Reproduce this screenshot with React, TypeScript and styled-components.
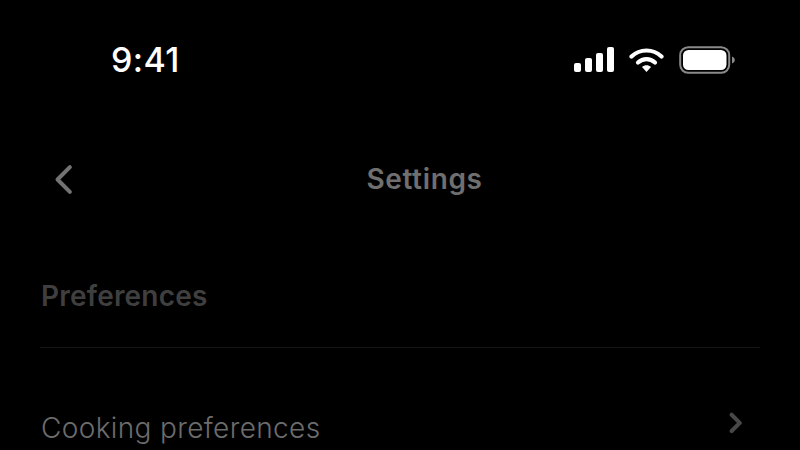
import React from 'react'
import styled, { createGlobalStyle } from 'styled-components'

const GlobalStyle = createGlobalStyle`
    html, body {
        margin: 0;
        height: 100%;
        background: #000;
    }
    body {
        font-family: "Inter", "Liberation Sans", sans-serif;
        overflow: hidden;
    }
`

const Screen = styled.main`
    width: 800px;
    height: 450px;
    overflow: hidden;
    background: #000;
`

const StatusBar = styled.header`
    height: 120px;
    box-sizing: border-box;
    padding: 40px 65px 0 111px;
    display: flex;
    justify-content: space-between;
    align-items: flex-start;
`

const Time = styled.span`
    font-size: 34px;
    line-height: 40px;
    font-weight: 500;
    letter-spacing: 0.4px;
    color: #fff;
`

const StatusIcons = styled.div`
    display: flex;
    align-items: center;
    gap: 15px;
    height: 40px;
`

const NavBar = styled.nav`
    height: 118px;
    padding: 0 3px 0 52px;
    display: grid;
    grid-template-columns: 1fr auto 1fr;
    align-items: center;
`

const BackButton = styled.button`
    padding: 0;
    border: 0;
    background: none;
    width: 60px;
    height: 40px;
    display: flex;
    align-items: center;
`

const NavTitle = styled.h1`
    margin: 0;
    font-size: 28px;
    line-height: 34px;
    font-weight: 600;
    letter-spacing: 0.65px;
    color: #6f6f6f;
`

const Section = styled.section`
    padding: 0 40px;
`

const SectionHeading = styled.h2`
    margin: 0;
    padding: 41px 0 0 1px;
    height: 68px;
    font-size: 28px;
    line-height: 34px;
    font-weight: 600;
    letter-spacing: 0.2px;
    color: #3f3f3f;
    border-bottom: 1px solid #161616;
`

const Row = styled.div`
    display: flex;
    align-items: center;
    justify-content: space-between;
    padding: 63px 18px 0 1px;
`

const RowLabel = styled.span`
    font-size: 28px;
    line-height: 34px;
    font-weight: 350;
    letter-spacing: 0.36px;
    color: #6c6c6c;
`

const RowArrow = styled.span`
    display: flex;
    margin-bottom: 10px;
`

const Chevron: React.FC<{ direction: 'left' | 'right'; color: string; size: number; weight: number }> = ({ direction, color, size, weight }) => (
    <svg width={size} height={size * 1.5} viewBox="0 0 16 24" fill="none">
        <path
            d={direction === 'left' ? 'M13 3 L4 12 L13 21' : 'M4 3 L13 12 L4 21'}
            stroke={color}
            strokeWidth={weight}
            strokeLinecap="round"
            strokeLinejoin="round"
        />
    </svg>
)

const SignalIcon = () => (
    <svg width="40" height="26" viewBox="0 0 40 26" fill="#fff">
        <rect x="0" y="16" width="7" height="9" rx="2" />
        <rect x="11" y="11" width="7" height="14" rx="2" />
        <rect x="22" y="6" width="7" height="19" rx="2" />
        <rect x="33" y="0" width="7" height="25" rx="2" />
    </svg>
)

const WifiIcon = () => (
    <svg width="35" height="26" viewBox="0 0 34 26" fill="none">
        <path d="M2 9.5 C10.5 1.5 23.5 1.5 32 9.5" stroke="#fff" strokeWidth="4.2" strokeLinecap="round" />
        <path d="M8.5 15.5 C13.5 11 20.5 11 25.5 15.5" stroke="#fff" strokeWidth="4.2" strokeLinecap="round" />
        <path d="M12.5 20 C15 17.8 19 17.8 21.5 20 L17 25 Z" fill="#fff" />
    </svg>
)

const BatteryIcon = () => (
    <svg width="56" height="28" viewBox="0 0 56 28" fill="none">
        <rect x="1.2" y="1.2" width="49" height="25.6" rx="8" stroke="#8a8a8a" strokeWidth="2" />
        <rect x="4" y="4" width="43.5" height="20" rx="5.5" fill="#fff" />
        <path d="M53 10.5 C55 11.3 55.8 12.5 55.8 14 C55.8 15.5 55 16.7 53 17.5 Z" fill="#8a8a8a" />
    </svg>
)

export default function App() {
    return (
        <Screen>
            <GlobalStyle />
            <StatusBar>
                <Time>9:41</Time>
                <StatusIcons>
                    <SignalIcon />
                    <WifiIcon />
                    <BatteryIcon />
                </StatusIcons>
            </StatusBar>
            <NavBar>
                <BackButton aria-label="Back">
                    <Chevron direction="left" color="#737373" size={22} weight={2.9} />
                </BackButton>
                <NavTitle>Settings</NavTitle>
            </NavBar>
            <Section>
                <SectionHeading>Preferences</SectionHeading>
                <Row>
                    <RowLabel>Cooking preferences</RowLabel>
                    <RowArrow>
                        <Chevron direction="right" color="#484848" size={14.5} weight={4.4} />
                    </RowArrow>
                </Row>
            </Section>
        </Screen>
    )
}
